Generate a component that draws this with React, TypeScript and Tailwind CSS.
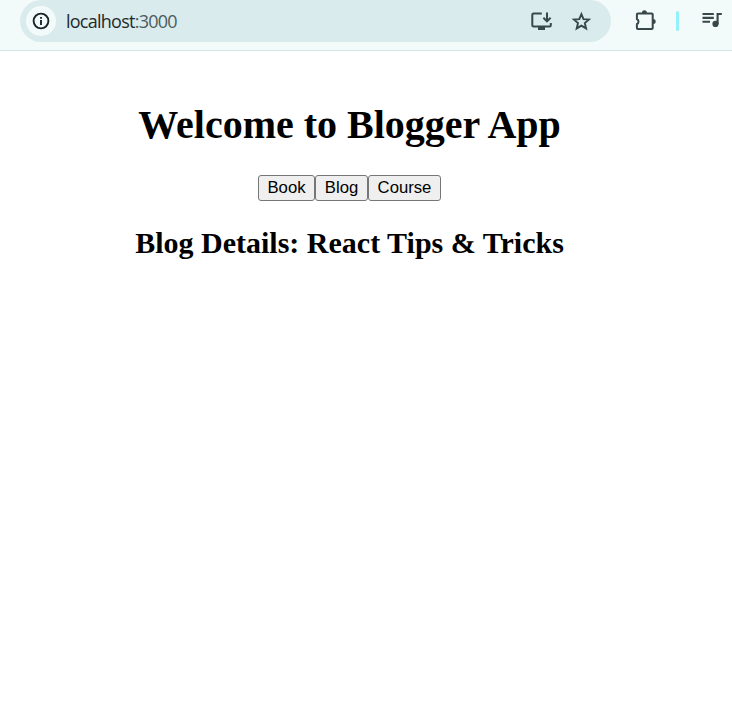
function InfoIcon() {
  return (
    <svg viewBox="0 0 20 20" className="size-5" fill="none" stroke="#1f2526" strokeWidth="1.9">
      <circle cx="10" cy="10" r="7.4" />
      <path d="M10 9v5M10 5.9v1.9" />
    </svg>
  );
}

function InstallIcon() {
  return (
    <svg viewBox="0 0 24 24" className="ml-auto size-6" fill="none" stroke="currentColor" strokeWidth="2">
      <path d="M12.8 4.6H4.5Q3.3 4.6 3.3 5.8v10.4q0 1.2 1.2 1.2h16q1.3 0 1.3-1.2V14" />
      <path d="M18 3.6v8.4M14.4 8.8l3.6 3.6 3.6-3.6" />
      <path d="M9 17.2h7V21H9z" fill="currentColor" stroke="none" />
    </svg>
  );
}

function StarIcon() {
  return (
    <svg viewBox="0 0 24 24" className="ml-4 size-6" fill="none" stroke="currentColor" strokeWidth="1.9">
      <path d="m12.4 5.2 2.1 4.9 5.4.5-4.1 3.5 1.3 5.3-4.7-2.8-4.7 2.8L9 14.1l-4.1-3.5 5.4-.5z" />
    </svg>
  );
}

function PuzzleIcon() {
  return (
    <svg viewBox="0 0 24 24" className="ml-[22px] size-6" fill="none" stroke="currentColor" strokeWidth="2">
      <path d="M4.9 4.6h13.8q1 0 1 1v13.4q0 1-1 1H4.9q-1 0-1-1v-3.8a2.9 2.9 0 0 0 0-5.2V5.6q0-1 1-1Z" />
      <path d="M8.9 4a2.5 2.7 0 0 1 5 0zM20 10a2.7 2.5 0 0 1 0 5z" fill="currentColor" stroke="none" />
    </svg>
  );
}

function QueueMusicIcon() {
  return (
    <svg viewBox="0 0 24 24" className="ml-[21px] size-6" fill="none" stroke="currentColor" strokeWidth="2.1">
      <path d="M2.5 5h11.3M2.5 8.9h11.3M2.5 12.7h7.5M17.6 15V5h4.2" />
      <circle cx="15.5" cy="14.9" r="3.1" fill="currentColor" stroke="none" />
    </svg>
  );
}

const tabs = [
  { label: "Book", width: "w-[57px]" },
  { label: "Blog", width: "w-[53px]" },
  { label: "Course", width: "w-[73px]" },
];

export default function App() {
  return (
    <div className="h-[720px] w-[732px] overflow-hidden bg-white text-black">
      <header className="flex h-[51px] items-start border-b border-[#d5e3e5] bg-[#f3fafa] pl-5 text-[#37474a]">
        <div className="flex h-[42px] w-[591px] items-center rounded-[21px] bg-[#daebed] pl-[6px] pr-[18px]">
          <span className="flex size-[30px] items-center justify-center rounded-full bg-[#f3fafa]">
            <InfoIcon />
          </span>
          <span className="ml-[10px] font-['Open_Sans',sans-serif] text-[18px] tracking-[-0.75px] text-[#1f2a2b]">
            localhost<span className="text-[#4b5c5e]">:3000</span>
          </span>
          <InstallIcon />
          <StarIcon />
        </div>
        <div className="flex h-[42px] items-center">
          <PuzzleIcon />
          <span className="ml-[19px] h-5 w-[3px] rounded-xs bg-[#93f1fb]" />
          <QueueMusicIcon />
        </div>
      </header>
      <main className="flex w-[699px] flex-col items-center font-['Liberation_Serif',serif]">
        <h1 className="mt-[50px] text-[40px] font-bold leading-[48px]">Welcome to Blogger App</h1>
        <div className="mt-[26px] flex font-['Liberation_Sans',sans-serif] text-[16.7px] leading-[22px]">
          {tabs.map((tab) => (
            <button
              key={tab.label}
              className={`${tab.width} h-[26px] rounded-[3px] border border-[#767676] bg-[#efefef]`}
            >
              {tab.label}
            </button>
          ))}
        </div>
        <h2 className="mt-[25px] text-[30px] font-bold leading-[34px]">Blog Details: React Tips &amp; Tricks</h2>
      </main>
    </div>
  );
}
